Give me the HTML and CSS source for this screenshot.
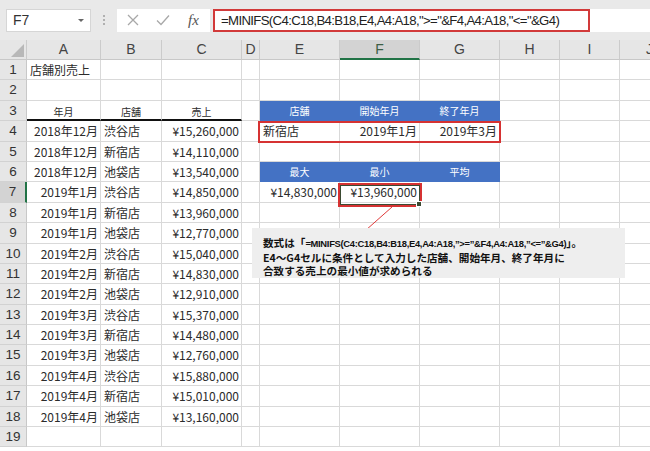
FILE: index.html
```html
<!DOCTYPE html>
<html lang="ja">
<head>
<meta charset="utf-8">
<link rel="stylesheet" href="styles.css">
</head>
<body>
<div class="app">
  <div class="topbar">
    <div class="namebox"><span>F7</span><span class="caret"></span></div>
    <div class="dots"><i></i><i></i><i></i></div>
    <div class="fxbox">
      <svg class="ico" width="14" height="14" viewBox="0 0 14 14"><path d="M2 2 L12 12 M12 2 L2 12" stroke="#a8a8a8" stroke-width="1.3" fill="none"/></svg>
      <svg class="ico" width="16" height="14" viewBox="0 0 16 14"><path d="M2 7.5 L6 11.5 L14 2.5" stroke="#a8a8a8" stroke-width="1.3" fill="none"/></svg>
      <span class="fx">fx</span>
    </div>
    <div class="formulawrap"><div class="formula">=MINIFS(C4:C18,B4:B18,E4,A4:A18,"&gt;="&amp;F4,A4:A18,"&lt;="&amp;G4)</div></div>
  </div>
  <div class="sheet">
    <div class="ch corner"><svg width="27" height="20" viewBox="0 0 27 20"><path d="M11 17 L24 17 L24 4 Z" fill="#b8b8b8"/></svg></div>
    <div class="ch">A</div><div class="ch">B</div><div class="ch">C</div><div class="ch">D</div><div class="ch">E</div><div class="ch sel">F</div><div class="ch">G</div><div class="ch">H</div><div class="ch">I</div><div class="ch">J</div>

    <div class="rh">1</div><div class="c l">店舗別売上</div><div class="c"></div><div class="c"></div><div class="c"></div><div class="c"></div><div class="c"></div><div class="c"></div><div class="c"></div><div class="c"></div><div class="c"></div>
    <div class="rh">2</div><div class="c"></div><div class="c"></div><div class="c"></div><div class="c"></div><div class="c"></div><div class="c"></div><div class="c"></div><div class="c"></div><div class="c"></div><div class="c"></div>
    <div class="rh">3</div><div class="c hd">年月</div><div class="c hd">店舗</div><div class="c hd">売上</div><div class="c"></div><div class="c blue">店舗</div><div class="c blue">開始年月</div><div class="c blue">終了年月</div><div class="c"></div><div class="c"></div><div class="c"></div>
    <div class="rh">4</div><div class="c r">2018年12月</div><div class="c l">渋谷店</div><div class="c r">¥15,260,000</div><div class="c"></div><div class="c l">新宿店</div><div class="c r">2019年1月</div><div class="c r">2019年3月</div><div class="c"></div><div class="c"></div><div class="c"></div>
    <div class="rh">5</div><div class="c r">2018年12月</div><div class="c l">新宿店</div><div class="c r">¥14,110,000</div><div class="c"></div><div class="c"></div><div class="c"></div><div class="c"></div><div class="c"></div><div class="c"></div><div class="c"></div>
    <div class="rh">6</div><div class="c r">2018年12月</div><div class="c l">池袋店</div><div class="c r">¥13,540,000</div><div class="c"></div><div class="c blue">最大</div><div class="c blue">最小</div><div class="c blue">平均</div><div class="c"></div><div class="c"></div><div class="c"></div>
    <div class="rh selr">7</div><div class="c r">2019年1月</div><div class="c l">渋谷店</div><div class="c r">¥14,850,000</div><div class="c"></div><div class="c r">¥14,830,000</div><div class="c r">¥13,960,000</div><div class="c"></div><div class="c"></div><div class="c"></div><div class="c"></div>
    <div class="rh">8</div><div class="c r">2019年1月</div><div class="c l">新宿店</div><div class="c r">¥13,960,000</div><div class="c"></div><div class="c"></div><div class="c"></div><div class="c"></div><div class="c"></div><div class="c"></div><div class="c"></div>
    <div class="rh">9</div><div class="c r">2019年1月</div><div class="c l">池袋店</div><div class="c r">¥12,770,000</div><div class="c"></div><div class="c"></div><div class="c"></div><div class="c"></div><div class="c"></div><div class="c"></div><div class="c"></div>
    <div class="rh">10</div><div class="c r">2019年2月</div><div class="c l">渋谷店</div><div class="c r">¥15,040,000</div><div class="c"></div><div class="c"></div><div class="c"></div><div class="c"></div><div class="c"></div><div class="c"></div><div class="c"></div>
    <div class="rh">11</div><div class="c r">2019年2月</div><div class="c l">新宿店</div><div class="c r">¥14,830,000</div><div class="c"></div><div class="c"></div><div class="c"></div><div class="c"></div><div class="c"></div><div class="c"></div><div class="c"></div>
    <div class="rh">12</div><div class="c r">2019年2月</div><div class="c l">池袋店</div><div class="c r">¥12,910,000</div><div class="c"></div><div class="c"></div><div class="c"></div><div class="c"></div><div class="c"></div><div class="c"></div><div class="c"></div>
    <div class="rh">13</div><div class="c r">2019年3月</div><div class="c l">渋谷店</div><div class="c r">¥15,370,000</div><div class="c"></div><div class="c"></div><div class="c"></div><div class="c"></div><div class="c"></div><div class="c"></div><div class="c"></div>
    <div class="rh">14</div><div class="c r">2019年3月</div><div class="c l">新宿店</div><div class="c r">¥14,480,000</div><div class="c"></div><div class="c"></div><div class="c"></div><div class="c"></div><div class="c"></div><div class="c"></div><div class="c"></div>
    <div class="rh">15</div><div class="c r">2019年3月</div><div class="c l">池袋店</div><div class="c r">¥12,760,000</div><div class="c"></div><div class="c"></div><div class="c"></div><div class="c"></div><div class="c"></div><div class="c"></div><div class="c"></div>
    <div class="rh">16</div><div class="c r">2019年4月</div><div class="c l">渋谷店</div><div class="c r">¥15,880,000</div><div class="c"></div><div class="c"></div><div class="c"></div><div class="c"></div><div class="c"></div><div class="c"></div><div class="c"></div>
    <div class="rh">17</div><div class="c r">2019年4月</div><div class="c l">新宿店</div><div class="c r">¥15,010,000</div><div class="c"></div><div class="c"></div><div class="c"></div><div class="c"></div><div class="c"></div><div class="c"></div><div class="c"></div>
    <div class="rh">18</div><div class="c r">2019年4月</div><div class="c l">池袋店</div><div class="c r">¥13,160,000</div><div class="c"></div><div class="c"></div><div class="c"></div><div class="c"></div><div class="c"></div><div class="c"></div><div class="c"></div>
    <div class="rh">19</div><div class="c"></div><div class="c"></div><div class="c"></div><div class="c"></div><div class="c"></div><div class="c"></div><div class="c"></div><div class="c"></div><div class="c"></div><div class="c"></div>

    <div class="redbox cond"></div>
    <div class="redbox result"><div class="selcell"><span class="handle"></span></div></div>
    <svg class="leader" width="40" height="40" viewBox="0 0 40 40"><path d="M30 1 L4 24" stroke="#e03a3a" stroke-width="1" fill="none"/></svg>
    <div class="callout">数式は「<span class="code">=MINIFS(C4:C18,B4:B18,E4,A4:A18,”&gt;=”&amp;F4,A4:A18,”&lt;=”&amp;G4)</span>」。<br>E4～G4セルに条件として入力した店舗、開始年月、終了年月に<br>合致する売上の最小値が求められる</div>
  </div>
</div>
</body>
</html>
```

FILE: styles.css
```css
html, body {
  margin: 0;
  padding: 0;
  background: #ffffff;
}
body {
  width: 650px;
  height: 451px;
  overflow: hidden;
  font-family: "Noto Sans CJK JP", "Liberation Sans", sans-serif;
  color: #222;
}
.app {
  width: 650px;
  height: 451px;
  overflow: hidden;
}
.topbar {
  height: 40px;
  background: #e9e9e9;
  display: flex;
  align-items: center;
  padding-left: 6px;
  box-sizing: border-box;
}
.namebox {
  width: 85px;
  height: 23px;
  background: #fff;
  box-sizing: border-box;
  border: 1px solid #d6d6d6;
  display: flex;
  align-items: center;
  justify-content: space-between;
  padding: 0 6px 0 6px;
  font-family: "Liberation Sans", sans-serif;
  font-size: 14px;
  color: #333;
}
.caret {
  width: 0;
  height: 0;
  border-left: 3px solid transparent;
  border-right: 3px solid transparent;
  border-top: 3px solid #666;
}
.dots {
  width: 26px;
  display: flex;
  flex-direction: column;
  align-items: center;
  gap: 2px;
}
.dots i {
  width: 2px;
  height: 2px;
  background: #b0b0b0;
}
.fxbox {
  width: 93px;
  height: 23px;
  background: #fff;
  display: flex;
  align-items: center;
  box-sizing: border-box;
  padding-left: 9px;
  gap: 15px;
}
.fx {
  font-family: "Liberation Serif", serif;
  font-style: italic;
  font-size: 15px;
  color: #555;
  margin-left: 2px;
}
.formulawrap {
  margin-left: 3px;
  flex: 1;
  height: 23px;
  background: #fff;
}
.formula {
  width: 377px;
  height: 23px;
  box-sizing: border-box;
  border: 2px solid #d23a3a;
  font-family: "Liberation Sans", sans-serif;
  font-size: 13.2px;
  letter-spacing: -0.65px;
  line-height: 19px;
  padding-left: 6px;
  color: #222;
  white-space: nowrap;
  overflow: hidden;
}
.sheet {
  position: relative;
  display: grid;
  grid-template-columns: 27px 74px 61px 80px 18px 80px 80px 80px 60px 60px 60px;
  grid-template-rows: 20px repeat(19, 20.4px);
  background: #fff;
}
.sheet > div {
  box-sizing: border-box;
  white-space: nowrap;
}
.ch {
  background: #e6e6e6;
  border-right: 1px solid #cbcbcb;
  border-bottom: 1px solid #c8c8c8;
  text-align: center;
  font-family: "Liberation Sans", sans-serif;
  font-size: 14px;
  line-height: 19px;
  color: #444;
}
.ch.corner {
  padding: 0;
  line-height: 0;
}
.ch.sel {
  background: #d3d3d3;
  border-bottom: 2px solid #217346;
  color: #3d5e45;
}
.rh {
  background: #e6e6e6;
  border-right: 1px solid #c8c8c8;
  border-bottom: 1px solid #d2d2d2;
  text-align: center;
  font-family: "Liberation Sans", sans-serif;
  font-size: 13.5px;
  line-height: 20px;
  color: #333;
}
.rh.selr {
  background: #d3d3d3;
  border-right: 2px solid #217346;
}
.c {
  border-right: 1px solid #d9d9d9;
  border-bottom: 1px solid #d9d9d9;
  font-size: 12px;
  line-height: 20px;
  padding: 0 2px;
  color: #2b2b2b;
}
.c.r { text-align: right; }
.c.l { text-align: left; padding-left: 3px; }
.c.hd {
  text-align: center;
  font-size: 10px;
  border-bottom: 2px solid #111;
  line-height: 21px;
}
.c.blue {
  background: #4472c4;
  border-color: #4472c4;
  color: #fff;
  text-align: center;
  font-size: 10px;
  line-height: 20px;
}
.redbox {
  position: absolute;
  box-sizing: border-box;
  border: 2px solid #d63232;
}
.redbox.cond {
  left: 258px;
  top: 81px;
  width: 243px;
  height: 22px;
}
.redbox.result {
  left: 338px;
  top: 143px;
  width: 84px;
  height: 24px;
}
.selcell {
  position: absolute;
  inset: 0;
  border: 1px solid #3b4a32;
}
.handle {
  position: absolute;
  right: -3px;
  bottom: -3px;
  width: 4px;
  height: 4px;
  background: #3b4a32;
  border: 1px solid #fff;
}
.leader {
  position: absolute;
  left: 362px;
  top: 166px;
}
.callout {
  position: absolute;
  left: 252px;
  top: 188px;
  width: 373px;
  height: 50px;
  box-sizing: border-box;
  background: #eeeeee;
  padding: 8px 0 0 11px;
  font-size: 10.6px;
  line-height: 13.5px;
  font-weight: 700;
  color: #111;
  white-space: nowrap;
}
.callout .code {
  font-family: "Liberation Sans", sans-serif;
  font-size: 9.4px;
  letter-spacing: -0.3px;
}
```
